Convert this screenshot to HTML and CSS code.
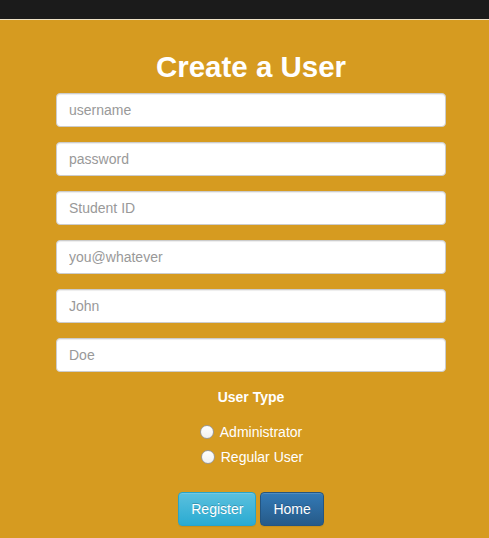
FILE: index.html
```html
<!DOCTYPE html>
<html>
<head>
<meta charset="utf-8">
<link rel="stylesheet" href="styles.css">
</head>
<body>
<div class="navbar"></div>
<main class="page">
  <form class="user-form">
    <h1 class="title">Create a User</h1>
    <input class="field" type="text" placeholder="username">
    <input class="field" type="password" placeholder="password">
    <input class="field" type="text" placeholder="Student ID">
    <input class="field" type="email" placeholder="you@whatever">
    <input class="field" type="text" placeholder="John">
    <input class="field" type="text" placeholder="Doe">
    <div class="type-label">User Type</div>
    <div class="radios">
      <label class="radio"><input type="radio" name="type"><span>Administrator</span></label>
      <label class="radio second"><input type="radio" name="type"><span>Regular User</span></label>
    </div>
    <div class="actions">
      <button type="button" class="btn btn-info">Register</button>
      <button type="button" class="btn btn-primary">Home</button>
    </div>
  </form>
</main>
</body>
</html>
```
FILE: styles.css
```css
html, body {
  margin: 0;
  padding: 0;
}
body {
  background: #d69b20;
  font-family: "Liberation Sans", Arial, sans-serif;
  font-size: 14px;
  line-height: 1.42857;
  color: #fff;
  height: 538px;
  overflow: hidden;
}
.navbar {
  height: 19px;
  background: #1b1b1b;
  border-bottom: 1px solid #efe3c8;
}
.page {
  padding-top: 30px;
}
.user-form {
  width: 390px;
  margin-left: 56px;
  display: flex;
  flex-direction: column;
}
.title {
  margin: 0 0 10px;
  font-size: 29.5px;
  line-height: 33px;
  font-weight: bold;
  text-align: center;
  color: #fff;
}
.field {
  box-sizing: border-box;
  height: 34px;
  margin: 0 0 15px;
  padding: 6px 12px;
  font-family: inherit;
  font-size: 14px;
  color: #555;
  background: #fff;
  border: 1px solid #ccc;
  border-radius: 4px;
  box-shadow: inset 0 1px 1px rgba(0,0,0,.075);
  outline: none;
}
.field::placeholder {
  color: #999;
}
.type-label {
  font-weight: bold;
  text-align: center;
  margin-bottom: 5px;
  line-height: 20px;
}
.radios {
  display: flex;
  flex-direction: column;
  align-items: center;
  margin-top: 10px;
  gap: 5px;
}
.radio {
  display: flex;
  align-items: center;
  gap: 6px;
  height: 20px;
  line-height: 20px;
}
.radio.second {
  padding-left: 2px;
}
.radio input {
  appearance: none;
  -webkit-appearance: none;
  margin: 0;
  width: 14px;
  height: 14px;
  border-radius: 50%;
  border: 1px solid #9a9a9a;
  background: linear-gradient(#ffffff, #f1f1f1);
  box-sizing: border-box;
}
.actions {
  display: flex;
  justify-content: center;
  gap: 4px;
  margin-top: 25px;
}
.btn {
  font-family: inherit;
  font-size: 14px;
  line-height: 20px;
  padding: 6px 12px;
  border-radius: 4px;
  color: #fff;
  text-shadow: 0 -1px 0 rgba(0,0,0,.2);
  box-shadow: inset 0 1px 0 rgba(255,255,255,.15), 0 1px 1px rgba(0,0,0,.075);
  cursor: pointer;
}
.btn-info {
  background: linear-gradient(#5bc0de, #2aabd2);
  border: 1px solid #28a4c9;
}
.btn-primary {
  background: linear-gradient(#337ab7, #265a88);
  border: 1px solid #245580;
}
```
